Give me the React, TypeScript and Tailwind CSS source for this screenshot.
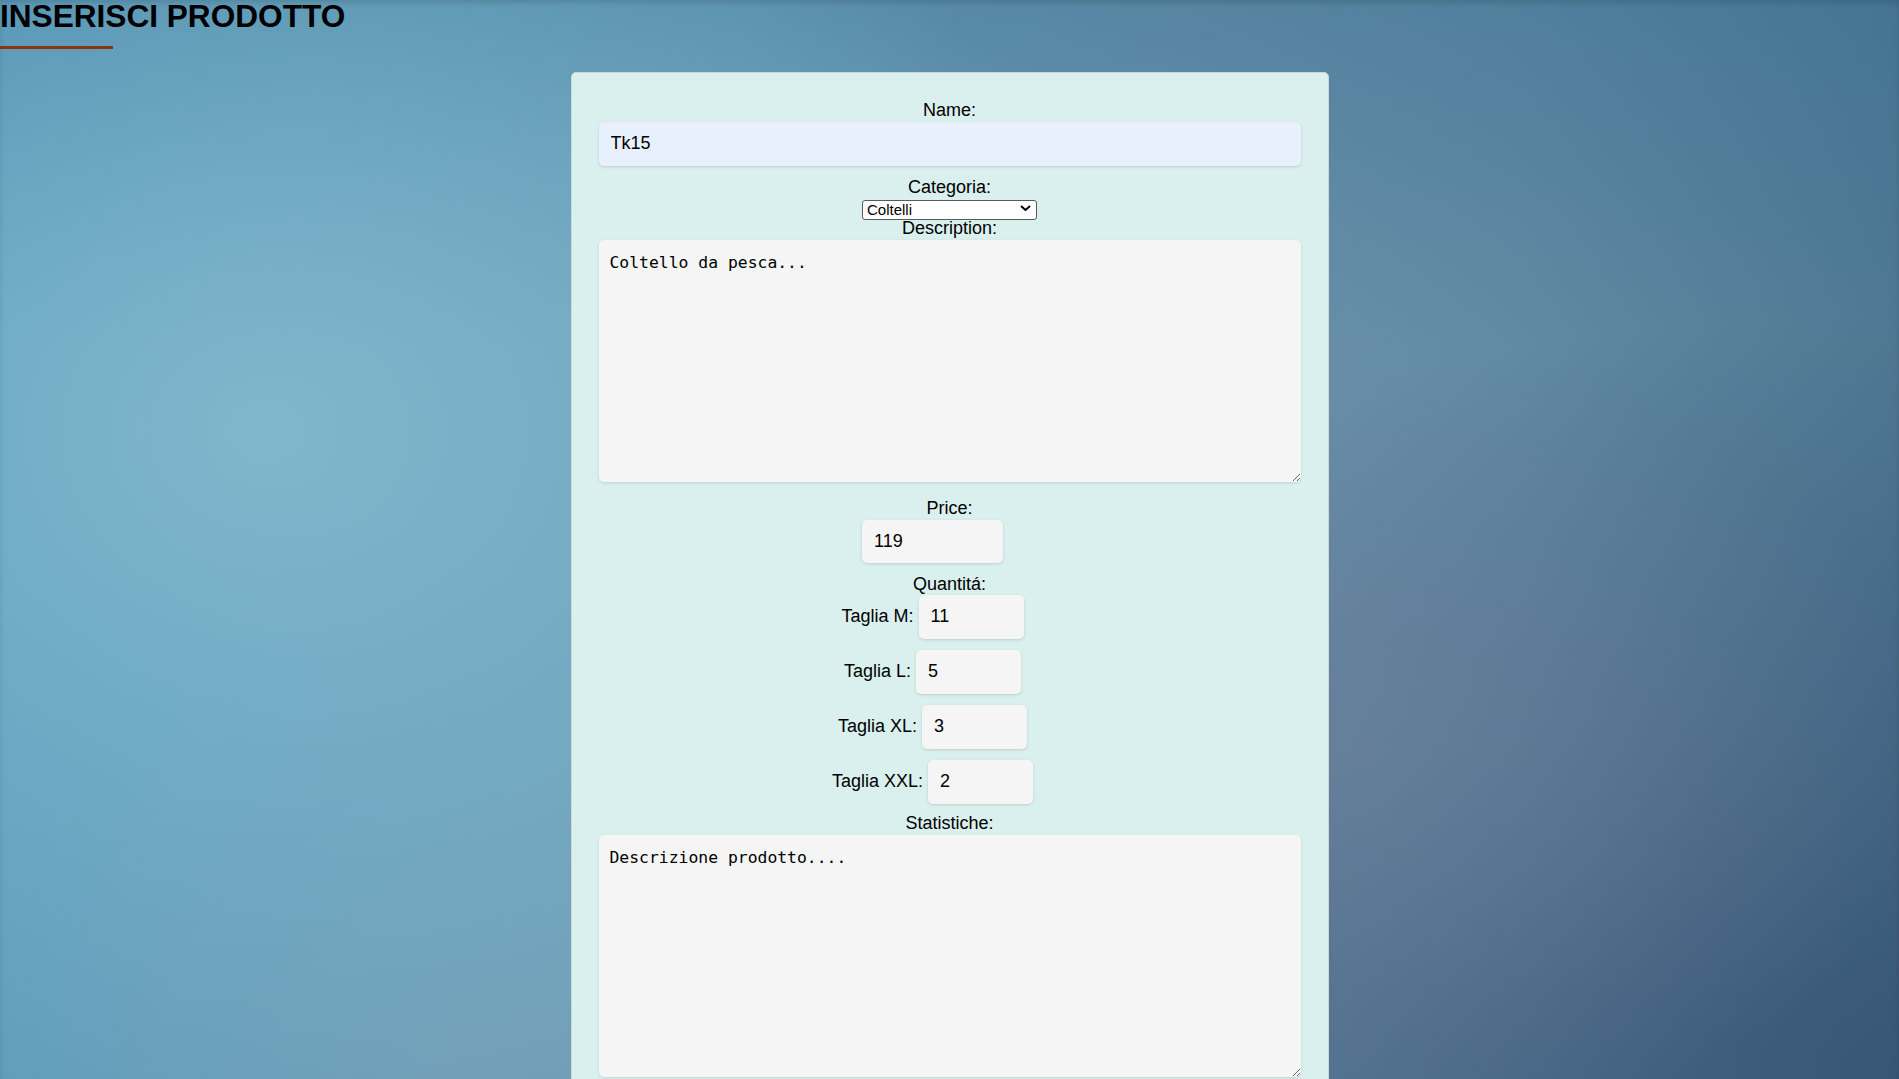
import type { ReactNode } from "react";

/*
  Inserisci prodotto — admin form for adding a product to the catalogue.
  Single centred card over a blurred blue backdrop.
*/

const SIZES = [
  { label: "Taglia M:", value: "11" },
  { label: "Taglia L:", value: "5" },
  { label: "Taglia XL:", value: "3" },
  { label: "Taglia XXL:", value: "2" },
];

function FieldLabel({ children }: Readonly<{ children: ReactNode }>) {
  return <label className="block text-center text-[18px] leading-[20.7px] text-black">{children}</label>;
}

function SmallInput({ value, width }: Readonly<{ value: string; width: string }>) {
  // the original inputs carry a trailing gap, which is why the rows sit left of centre
  return (
    <input
      type="text"
      defaultValue={value}
      className={`${width} mr-[34px] h-full rounded-[5px] bg-[#f5f5f5] px-3 text-[18px] text-black shadow-[0_1px_3px_rgba(0,0,0,0.14)] outline-none`}
    />
  );
}

function SizeRow({ label, value }: Readonly<{ label: string; value: string }>) {
  return (
    <div className="flex h-[44px] items-center justify-center gap-[5px]">
      <span className="text-[18px] leading-[20.7px] text-black">{label}</span>
      <SmallInput value={value} width="w-[105px]" />
    </div>
  );
}

function CategorySelect() {
  return (
    <div className="relative mx-auto mt-[1px] h-[20px] w-[175px]">
      <select
        defaultValue="Coltelli"
        className="h-full w-full appearance-none rounded-[3px] border border-[#5a5a5a] bg-white pl-[4px] text-[15px] leading-[18px] text-black outline-none"
      >
        <option>Coltelli</option>
        <option>Canne</option>
        <option>Mulinelli</option>
        <option>Abbigliamento</option>
      </select>
      <svg
        className="pointer-events-none absolute right-[6px] top-[7px] h-[6px] w-[11px]"
        viewBox="0 0 11 6"
        fill="none"
      >
        <path d="M1 1 L5.5 5 L10 1" stroke="#000" strokeWidth="2" strokeLinejoin="miter" />
      </svg>
    </div>
  );
}

function BigTextarea({ value, className }: Readonly<{ value: string; className?: string }>) {
  return (
    <textarea
      defaultValue={value}
      className={`block h-[242px] w-full rounded-[5px] bg-[#f5f5f5] pl-[11px] pr-3 pt-[11px] font-['DejaVu_Sans_Mono',monospace] text-[16.4px] text-black shadow-[0_1px_3px_rgba(0,0,0,0.12)] outline-none ${className ?? ""}`}
    />
  );
}

export default function App() {
  return (
    <div
      className="min-h-screen w-full bg-fixed font-['Liberation_Sans',Arial,sans-serif] text-black shadow-[inset_0_3px_5px_rgba(0,0,0,0.12)]"
      style={{
        backgroundImage:
          "radial-gradient(ellipse 45% 65% at 14% 40%, rgba(130,185,205,0.9), rgba(130,185,205,0) 100%)," +
          "radial-gradient(ellipse 35% 40% at 25% 100%, rgba(125,158,180,0.55), rgba(125,158,180,0))," +
          "radial-gradient(ellipse 30% 36% at 72% 70%, rgba(122,136,160,0.42), rgba(122,136,160,0))," +
          "radial-gradient(ellipse at 100% 100%, rgba(45,70,105,0.7), rgba(45,70,105,0) 50%)," +
          "linear-gradient(to bottom, rgba(50,110,145,0.38) 0%, rgba(50,110,145,0) 32%)," +
          "linear-gradient(to right, #5a9dbd 0%, #6c9fb9 40%, #6c92ab 62%, #6289a3 80%, #4f7893 100%)",
      }}
    >
      <h1 className="m-0 text-[31.6px] font-bold leading-[32px] text-black">INSERISCI PRODOTTO</h1>
      <div className="mt-[14px] h-[3px] w-[113px] bg-[#8a3510]" />

      <form className="mx-auto mt-[23px] w-[758px] rounded-[5px] border border-[#cfd8d8] bg-[#daf0ee] px-[27px] pb-[28px] pt-[27px]">
        <FieldLabel>Name:</FieldLabel>
        <input
          type="text"
          defaultValue="Tk15"
          className="mb-[11px] mt-[1px] block h-[44px] w-full rounded-[5px] bg-[#e8f0fe] px-3 text-[18px] text-black shadow-[0_1px_3px_rgba(0,0,0,0.14)] outline-none"
        />

        <FieldLabel>Categoria:</FieldLabel>
        <CategorySelect />

        <FieldLabel>Description:</FieldLabel>
        <BigTextarea value="Coltello da pesca..." className="mb-[16px] mt-[1px]" />

        <FieldLabel>Price:</FieldLabel>
        <div className="mb-[11px] mt-[1px] flex h-[43px] justify-center">
          <SmallInput value="119" width="w-[141px]" />
        </div>

        <FieldLabel>Quantitá:</FieldLabel>
        <div className="mb-[9px] flex flex-col gap-[11px]">
          {SIZES.map((s) => (
            <SizeRow key={s.label} label={s.label} value={s.value} />
          ))}
        </div>

        <FieldLabel>Statistiche:</FieldLabel>
        <BigTextarea value="Descrizione prodotto...." className="mt-[2px]" />
      </form>
    </div>
  );
}
